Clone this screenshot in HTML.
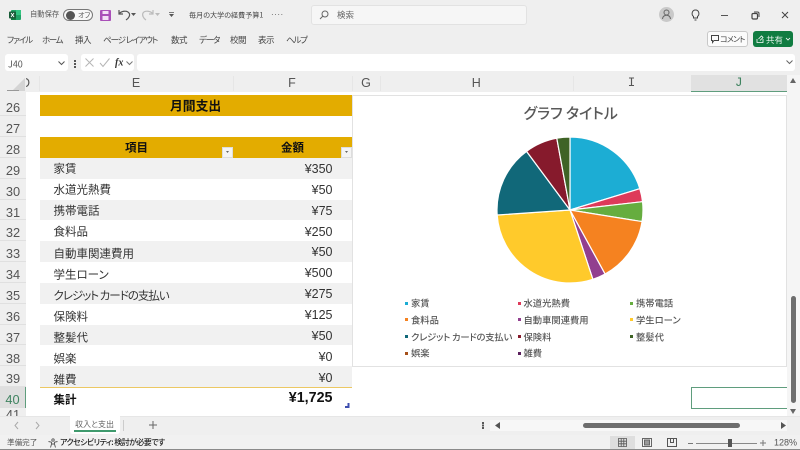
<!DOCTYPE html>
<html lang="ja"><head><meta charset="utf-8"><title>Excel</title>
<style>
*{box-sizing:border-box}
html,body{margin:0;padding:0}
body{width:800px;height:450px;overflow:hidden;position:relative;background:#efefef;font-family:"Liberation Sans","Noto Sans CJK JP",sans-serif;color:#333}
.t{position:absolute;white-space:nowrap;font-family:"Noto Sans CJK JP","Liberation Sans",sans-serif;font-feature-settings:"palt";line-height:1;transform:translateY(-50%)}
.b{position:absolute}
.m{font-size:8.500px;color:#444;top:40px}
.ch{position:absolute;top:76px;height:15px;line-height:15px;font-size:12.500px;color:#555;text-align:center}
.rn{position:absolute;left:0;width:26px;text-align:center;font-size:12.800px;color:#555;border-bottom:1px solid #e0e0e0;height:20.850px;line-height:25px}
.row{position:absolute;left:39.500px;width:312px;height:20.850px}
.c{font-size:11.500px;color:#333;left:53.500px}
.v{position:absolute;right:467.500px;font-size:12.500px;color:#333;line-height:1;transform:translateY(-50%)}
.l{font-size:9.300px;font-weight:500;color:#595959}
.s{position:absolute;width:3px;height:3px}
svg{position:absolute;overflow:visible}
</style></head><body>

<!-- title bar -->
<svg style="left:9px;top:9px" width="12" height="12" viewBox="0 0 12 12"><rect x="2" y="1" width="10" height="10" rx="1" fill="#21a366"/><rect x="7" y="1" width="5" height="5" fill="#33c481"/><rect x="2" y="6" width="5" height="5" fill="#107c41"/><rect x="0" y="2.500" width="7" height="7" rx="1" fill="#185c37"/><path d="M2 4l3 4M5 4l-3 4" stroke="#fff" stroke-width=".9"/></svg>
<div class="t" style="left:30px;top:15px;font-size:7.300px;color:#555">自動保存</div>
<div class="b" style="left:63px;top:9px;width:30px;height:12px;border:1px solid #777;border-radius:6px;background:#f8f8f8"></div>
<div class="b" style="left:65.500px;top:10.500px;width:9px;height:9px;border-radius:50%;background:#555"></div>
<div class="t" style="left:78px;top:15.500px;font-size:7px;color:#555">オフ</div>
<svg style="left:100px;top:10px" width="11" height="11" viewBox="0 0 11 11"><rect width="11" height="11" rx="1" fill="#a94fb8"/><rect x="2.500" y="1" width="6" height="3" fill="#f3dff6"/><rect x="2.500" y="6" width="6" height="4" fill="#f3dff6"/></svg>
<svg style="left:117px;top:8px" width="16" height="14" viewBox="0 0 16 14" fill="none" stroke="#555" stroke-width="1.200"><path d="M2 2v4h4M2 6c2-3 8-4 10-1 1.500 2 0 5-3 7"/></svg>
<svg style="left:131px;top:13px" width="5" height="4" viewBox="0 0 5 4" fill="#555"><path d="M0 0h5L2.500 3z"/></svg>
<svg style="left:141px;top:8px" width="16" height="14" viewBox="0 0 16 14" fill="none" stroke="#bbb" stroke-width="1.200"><path d="M12 2v4H8M12 6C10 3 4 2 2 5c-1 2 0 5 3 7"/></svg>
<svg style="left:155px;top:13px" width="5" height="4" viewBox="0 0 5 4" fill="#bbb"><path d="M0 0h5L2.500 3z"/></svg>
<svg style="left:168px;top:12px" width="7" height="6" viewBox="0 0 7 6" fill="#555"><path d="M1 0h5v.8H1zM1 2h5L3.500 5z"/></svg>
<div class="t" style="left:189px;top:15.500px;font-size:7.100px;color:#444">毎月の大学の経費予算1</div>
<div class="t" style="left:271px;top:15px;font-size:8px;color:#555;font-family:'Liberation Sans',sans-serif;letter-spacing:.5px">····</div>
<div class="b" style="left:311px;top:5px;width:216px;height:20px;background:#f6f6f6;border:1px solid #e2e2e2;border-radius:3px"></div>
<svg style="left:319px;top:10px" width="10" height="10" viewBox="0 0 10 10" fill="none" stroke="#666"><circle cx="6" cy="4" r="3"/><path d="M4 6L1 9"/></svg>
<div class="t" style="left:337px;top:15px;font-size:8.500px;color:#666">検索</div>
<div class="b" style="left:659px;top:7px;width:15px;height:15px;border-radius:50%;background:#c9c9c9"></div>
<svg style="left:662px;top:9px" width="9" height="11" viewBox="0 0 9 11" fill="none" stroke="#666"><circle cx="4.500" cy="3.500" r="2.500"/><path d="M.5 10c0-5 8-5 8 0"/></svg>
<svg style="left:691px;top:9px" width="9" height="12" viewBox="0 0 9 12" fill="none" stroke="#444"><path d="M2.500 7.500C0 5.500 1 1 4.500 1S9 5.500 6.500 7.500V9h-4zM3.500 11h2"/></svg>
<div class="b" style="left:721px;top:15px;width:7px;height:1px;background:#555"></div>
<svg style="left:751px;top:11px" width="9" height="9" viewBox="0 0 9 9" fill="none" stroke="#444"><rect x="1" y="2.500" width="5.500" height="5.500" rx="1.200" stroke-width="1.200"/><path d="M3 1h3.500A1.500 1.500 0 0 1 8 2.500V6"/></svg>
<svg style="left:781px;top:11px" width="8" height="8" viewBox="0 0 8 8" stroke="#444"><path d="M1 1l6 6M7 1L1 7"/></svg>

<!-- menu -->
<div class="t m" style="left:7px;letter-spacing:-1.100px">ファイル</div>
<div class="t m" style="left:42px;letter-spacing:-1.400px">ホーム</div>
<div class="t m" style="left:75px;letter-spacing:-.5px">挿入</div>
<div class="t m" style="left:103px;letter-spacing:-1.100px">ページ レイアウト</div>
<div class="t m" style="left:171px;letter-spacing:-.5px">数式</div>
<div class="t m" style="left:199px;letter-spacing:-1.200px">データ</div>
<div class="t m" style="left:230px;letter-spacing:-.5px">校閲</div>
<div class="t m" style="left:258px;letter-spacing:-.5px">表示</div>
<div class="t m" style="left:286px;letter-spacing:-1.200px">ヘルプ</div>
<div class="b" style="left:707px;top:31px;width:41px;height:16px;background:#fbfbfb;border:1px solid #c8c8c8;border-radius:3px"></div>
<svg style="left:711px;top:35px" width="8" height="8" viewBox="0 0 8 8" fill="none" stroke="#444"><path d="M.5.500h7v5H3L1.500 7.500v-2h-1z"/></svg>
<div class="t" style="left:720px;top:39.500px;font-size:8px;color:#444;letter-spacing:-.8px">コメント</div>
<div class="b" style="left:753px;top:31px;width:40px;height:16px;background:#107c41;border-radius:3px"></div>
<svg style="left:756px;top:35px" width="8" height="8" viewBox="0 0 8 8" fill="none" stroke="#fff" stroke-width=".8"><path d="M1 4v3.500h6V4M2.500 4l3-3 1.500 1.500-3 3"/></svg>
<div class="t" style="left:766px;top:39.500px;font-size:8.500px;color:#e8f5ee">共有</div>
<svg style="left:786px;top:38px" width="4" height="3" viewBox="0 0 4 3" fill="none" stroke="#fff" stroke-width=".8"><path d="M0 0l2 2 2-2"/></svg>

<!-- formula bar -->
<div class="b" style="left:5px;top:54px;width:63px;height:17px;background:#fff;border-radius:3px"></div>
<div class="t" style="left:8px;top:63.500px;font-size:9px;color:#555">J40</div>
<svg style="left:58px;top:61px" width="7" height="4" viewBox="0 0 7 4" fill="none" stroke="#555"><path d="M.5.500l3 3 3-3"/></svg>
<div class="b" style="left:74px;top:60px;width:1.500px;height:1.500px;background:#555;box-shadow:0 3px #555,0 6px #555"></div>
<div class="b" style="left:81px;top:54px;width:53px;height:17px;background:#fff;border-radius:3px"></div>
<svg style="left:85px;top:58px" width="25" height="9" viewBox="0 0 25 9" fill="none" stroke="#b5b5b5"><path d="M.5.500l8 8M8.500.500l-8 8M15 5l3 3.500L24.500.500"/></svg>
<div class="t" style="left:115px;top:63px;font:italic bold 10px 'Liberation Serif',serif;color:#333">fx</div>
<svg style="left:126px;top:61px" width="7" height="4" viewBox="0 0 7 4" fill="none" stroke="#777"><path d="M.5.500l3 3 3-3"/></svg>
<div class="b" style="left:137px;top:54px;width:658px;height:17px;background:#fff;border-radius:3px"></div>
<svg style="left:786px;top:60px" width="7" height="4" viewBox="0 0 7 4" fill="none" stroke="#666"><path d="M.5.500l3 3 3-3"/></svg>

<!-- column headers -->
<div class="b" style="left:0;top:75px;width:787px;height:17px;background:#efefef"></div>
<svg style="left:12px;top:78px" width="13" height="13" viewBox="0 0 13 13"><path d="M13 0v13H0z" fill="#d4d4d4"/></svg>
<div class="ch" style="left:26px;width:4px;overflow:hidden"><span style="position:absolute;right:0">D</span></div>
<div class="ch" style="left:39.500px;width:193px">E</div>
<div class="ch" style="left:232.500px;width:119px">F</div>
<div class="ch" style="left:352px;width:28px">G</div>
<div class="ch" style="left:380px;width:192.500px">H</div>
<div class="ch" style="left:572.500px;width:118px;font-family:'Liberation Mono',monospace">I</div>
<div class="b" style="left:690.500px;top:75px;width:96.500px;height:17px;background:#e1e1e1;border-bottom:1.500px solid #5f9d7d"></div>
<div class="ch" style="left:690.500px;width:96.500px;color:#3f8360;font-family:'Liberation Mono',monospace">J</div>
<div class="b" style="left:39px;top:76px;width:1px;height:15px;background:#e6e6e6"></div>
<div class="b" style="left:232.500px;top:76px;width:1px;height:15px;background:#e6e6e6"></div>
<div class="b" style="left:351.500px;top:76px;width:1px;height:15px;background:#e6e6e6"></div>
<div class="b" style="left:380px;top:76px;width:1px;height:15px;background:#e6e6e6"></div>
<div class="b" style="left:572.500px;top:76px;width:1px;height:15px;background:#e6e6e6"></div>

<!-- sheet -->
<div class="b" style="left:26px;top:92px;width:761px;height:324px;background:#fff"></div>

<!-- row headers -->
<div class="b" style="left:7px;top:90px;width:12px;height:1px;background:#999"></div>
<div class="rn" style="top:95.300px">26</div>
<div class="rn" style="top:116.150px">27</div>
<div class="rn" style="top:137px">28</div>
<div class="rn" style="top:157.850px">29</div>
<div class="rn" style="top:178.700px">30</div>
<div class="rn" style="top:199.550px">31</div>
<div class="rn" style="top:220.400px">32</div>
<div class="rn" style="top:241.250px">33</div>
<div class="rn" style="top:262.100px">34</div>
<div class="rn" style="top:282.950px">35</div>
<div class="rn" style="top:303.800px">36</div>
<div class="rn" style="top:324.650px">37</div>
<div class="rn" style="top:345.500px">38</div>
<div class="rn" style="top:366.350px">39</div>
<div class="rn" style="top:387.200px;background:#dfdfdf;color:#3f8360;border-right:1.500px solid #5f9d7d;border-bottom:0">40</div>
<div class="rn" style="top:408px;height:8px;overflow:hidden;line-height:14px;border:0">41</div>

<!-- table -->
<div class="b" style="left:39.500px;top:95.300px;width:312px;height:21.200px;background:#e3ac00"></div>
<div class="t" style="left:170px;top:106px;font-size:12.800px;font-weight:700;color:#111">月間支出</div>
<div class="b" style="left:39.500px;top:137px;width:312px;height:21px;background:#e3ac00"></div>
<div class="t" style="left:125px;top:147.500px;font-size:11.500px;font-weight:700;color:#111">項目</div>
<div class="t" style="left:281px;top:147.500px;font-size:11.500px;font-weight:700;color:#111">金額</div>
<div class="b" style="left:222px;top:147px;width:10.500px;height:10.500px;background:#f4f4f4;border:1px solid #ddd"></div>
<svg style="left:225px;top:151px" width="5" height="3" viewBox="0 0 5 3" fill="#666"><path d="M1 0h3L2.500 2z"/></svg>
<div class="b" style="left:341px;top:147px;width:10.500px;height:10.500px;background:#f4f4f4;border:1px solid #ddd"></div>
<svg style="left:344px;top:151px" width="5" height="3" viewBox="0 0 5 3" fill="#666"><path d="M1 0h3L2.500 2z"/></svg>

<div class="row" style="top:158px;background:#f1f1f1"></div>
<div class="row" style="top:199.550px;background:#f1f1f1"></div>
<div class="row" style="top:241.250px;background:#f1f1f1"></div>
<div class="row" style="top:282.950px;background:#f1f1f1"></div>
<div class="row" style="top:324.650px;background:#f1f1f1"></div>
<div class="row" style="top:366.350px;background:#f1f1f1"></div>
<div class="b" style="left:39.500px;top:386.500px;width:312px;height:1.500px;background:#ecc863"></div>

<div class="t c" style="top:168.500px">家賃</div><div class="v" style="top:168.500px">¥350</div>
<div class="t c" style="top:189.500px">水道光熱費</div><div class="v" style="top:189.500px">¥50</div>
<div class="t c" style="top:210.500px">携帯電話</div><div class="v" style="top:210.500px">¥75</div>
<div class="t c" style="top:231.500px">食料品</div><div class="v" style="top:231.500px">¥250</div>
<div class="t c" style="top:254px">自動車関連費用</div><div class="v" style="top:252px">¥50</div>
<div class="t c" style="top:275px">学生ローン</div><div class="v" style="top:273px">¥500</div>
<div class="t c" style="top:296px;letter-spacing:-1px">クレジット カードの支払い</div><div class="v" style="top:293.500px">¥275</div>
<div class="t c" style="top:317px">保険料</div><div class="v" style="top:314.500px">¥125</div>
<div class="t c" style="top:338px">整髪代</div><div class="v" style="top:335.500px">¥50</div>
<div class="t c" style="top:358.500px">娯楽</div><div class="v" style="top:356.500px">¥0</div>
<div class="t c" style="top:379.500px">雑費</div><div class="v" style="top:377.500px">¥0</div>
<div class="t c" style="top:400px;font-weight:700;color:#111">集計</div>
<div class="v" style="top:398px;font-weight:700;color:#111;font-size:14.300px">¥1,725</div>
<svg style="left:345px;top:403px" width="5" height="5" viewBox="0 0 5 5" fill="#3f4fb0"><path d="M4.500 0v5H0v-2h2.500V0z"/></svg>

<!-- chart -->
<div class="b" style="left:352px;top:95px;width:435px;height:271.500px;background:#fff;border:1px solid #e2e2e2"></div>
<div class="t" style="left:523.500px;top:113px;font-size:15px;font-weight:500;color:#595959">グラフ タイトル</div>
<svg style="left:569.500px;top:209.500px" width="1" height="1" stroke="#fff" stroke-width="1.200" stroke-linejoin="round">
<path fill="#1cadd4" d="M0 0V-73A73 73 0 0 1 69.820-21.300Z"/>
<path fill="#de3a5a" d="M0 0L69.820-21.300A73 73 0 0 1 72.530-8.290Z"/>
<path fill="#66ad3f" d="M0 0L72.530-8.290A73 73 0 0 1 72.070 11.580Z"/>
<path fill="#f58220" d="M0 0L72.070 11.580A73 73 0 0 1 35.060 64.030Z"/>
<path fill="#923f8f" d="M0 0L35.060 64.030A73 73 0 0 1 22.870 69.320Z"/>
<path fill="#ffca2b" d="M0 0L22.870 69.320A73 73 0 0 1-72.830 4.980Z"/>
<path fill="#116879" d="M0 0L-72.830 4.980A73 73 0 0 1-43.440-58.660Z"/>
<path fill="#861a2c" d="M0 0L-43.440-58.660A73 73 0 0 1-13.210-71.790Z"/>
<path fill="#3f6326" d="M0 0L-13.210-71.790A73 73 0 0 1 0-73Z"/>
</svg>
<div class="s" style="left:405px;top:301.500px;background:#1cadd4"></div><div class="t l" style="left:411px;top:303px">家賃</div>
<div class="s" style="left:517.500px;top:301.500px;background:#de3a5a"></div><div class="t l" style="left:523.500px;top:303px">水道光熱費</div>
<div class="s" style="left:630px;top:301.500px;background:#66ad3f"></div><div class="t l" style="left:636px;top:303px">携帯電話</div>
<div class="s" style="left:405px;top:318px;background:#f58220"></div><div class="t l" style="left:411px;top:319.500px">食料品</div>
<div class="s" style="left:517.500px;top:318px;background:#923f8f"></div><div class="t l" style="left:523.500px;top:319.500px">自動車関連費用</div>
<div class="s" style="left:630px;top:318px;background:#ffca2b"></div><div class="t l" style="left:636px;top:319.500px">学生ローン</div>
<div class="s" style="left:405px;top:335px;background:#116879"></div><div class="t l" style="left:411px;top:336.500px;letter-spacing:-.2px">クレジット カードの支払い</div>
<div class="s" style="left:517.500px;top:335px;background:#861a2c"></div><div class="t l" style="left:523.500px;top:336.500px">保険料</div>
<div class="s" style="left:630px;top:335px;background:#3f6326"></div><div class="t l" style="left:636px;top:336.500px">整髪代</div>
<div class="s" style="left:405px;top:351.500px;background:#a5501a"></div><div class="t l" style="left:411px;top:353px">娯楽</div>
<div class="s" style="left:517.500px;top:351.500px;background:#5a1f5c"></div><div class="t l" style="left:523.500px;top:353px">雑費</div>

<!-- selected cell -->
<div class="b" style="left:690.500px;top:387px;width:96.500px;height:21.500px;border:1px solid #5f9d7d;border-right:0"></div>

<!-- vertical scroll -->
<div class="b" style="left:787px;top:75px;width:13px;height:342px;background:#f5f5f5"></div>
<svg style="left:790px;top:78px" width="6" height="5" viewBox="0 0 6 5" fill="#666"><path d="M0 5L3 0l3 5z"/></svg>
<div class="b" style="left:791px;top:296px;width:5px;height:107px;background:#6e6e6e;border-radius:2.500px"></div>
<svg style="left:790px;top:409px" width="6" height="5" viewBox="0 0 6 5" fill="#666"><path d="M0 0l3 5 3-5z"/></svg>

<!-- sheet tabs -->
<div class="b" style="left:0;top:416px;width:800px;height:19px;background:#efefef;border-top:1px solid #e6e6e6"></div>
<svg style="left:14px;top:421px" width="30" height="9" viewBox="0 0 30 9" fill="none" stroke="#aaa"><path d="M4 1L1 4.500 4 8M22 1l3 3.500L22 8"/></svg>
<div class="b" style="left:70px;top:416px;width:50px;height:18px;background:#fff;border-radius:0 0 3px 3px"></div>
<div class="t" style="left:75px;top:424.500px;font-size:8px;color:#666">収入と支出</div>
<div class="b" style="left:74px;top:430px;width:42px;height:1.500px;background:#3f9a6d"></div>
<div class="b" style="left:123px;top:420px;width:1px;height:11px;background:#ccc"></div>
<svg style="left:149px;top:421px" width="8" height="8" viewBox="0 0 8 8" stroke="#666"><path d="M4 0v8M0 4h8"/></svg>
<div class="b" style="left:482px;top:422px;width:1.500px;height:1.500px;background:#555;box-shadow:0 2.500px #555,0 5px #555"></div>
<div class="b" style="left:490px;top:420px;width:297px;height:11px;background:#f7f7f7"></div>
<svg style="left:495px;top:422px" width="5" height="7" viewBox="0 0 5 7" fill="#555"><path d="M5 0L0 3.500 5 7z"/></svg>
<div class="b" style="left:583px;top:422.500px;width:157px;height:5.500px;background:#6e6e6e;border-radius:3px"></div>
<svg style="left:781px;top:422px" width="5" height="7" viewBox="0 0 5 7" fill="#555"><path d="M0 0l5 3.500L0 7z"/></svg>

<!-- status bar -->
<div class="b" style="left:0;top:435px;width:800px;height:14px;background:#f1f1f1"></div>
<div class="b" style="left:0;top:449px;width:800px;height:1px;background:#8a8a8a"></div>
<div class="t" style="left:7px;top:443px;font-size:7.600px;color:#555">準備完了</div>
<svg style="left:48px;top:438px" width="10" height="10" viewBox="0 0 10 10" fill="none" stroke="#555" stroke-width=".9"><circle cx="5" cy="2" r="1.200"/><path d="M.5 3.500l3 .7v2L2.500 9.500M9.500 3.500l-3 .7v2l1 3.300M3.500 6h3"/></svg>
<div class="t" style="left:60px;top:443px;font-size:8px;font-weight:500;color:#222;letter-spacing:-.6px">アクセシビリティ: 検討が必要です</div>
<div class="b" style="left:610px;top:436px;width:25px;height:13px;background:#dedede"></div>
<svg style="left:618px;top:438px" width="9" height="9" viewBox="0 0 9 9" fill="none" stroke="#555" stroke-width=".8"><path d="M.5.500h8v8h-8zM.5 3.200h8M.5 5.800h8M3.200.5v8M5.800.5v8"/></svg>
<svg style="left:642px;top:438px" width="10" height="9" viewBox="0 0 10 9" fill="none" stroke="#666"><rect x=".5" y=".5" width="9" height="8"/><rect x="2.500" y="2" width="5" height="5" fill="#999"/></svg>
<svg style="left:667px;top:438px" width="10" height="9" viewBox="0 0 10 9" fill="none" stroke="#555"><path d="M.5.500h9v8h-9zM3.500.5v4h3v-4"/></svg>
<div class="b" style="left:688px;top:443px;width:5px;height:1px;background:#777"></div>
<div class="b" style="left:696px;top:442.500px;width:61px;height:1px;background:#888"></div>
<div class="b" style="left:728px;top:439px;width:3.500px;height:8px;background:#555"></div>
<svg style="left:760px;top:440px" width="6" height="6" viewBox="0 0 6 6" stroke="#777"><path d="M3 0v6M0 3h6"/></svg>
<div class="t" style="left:774px;top:443px;font-size:9px;color:#555;font-family:'Liberation Sans',sans-serif">128%</div>
</body></html>
